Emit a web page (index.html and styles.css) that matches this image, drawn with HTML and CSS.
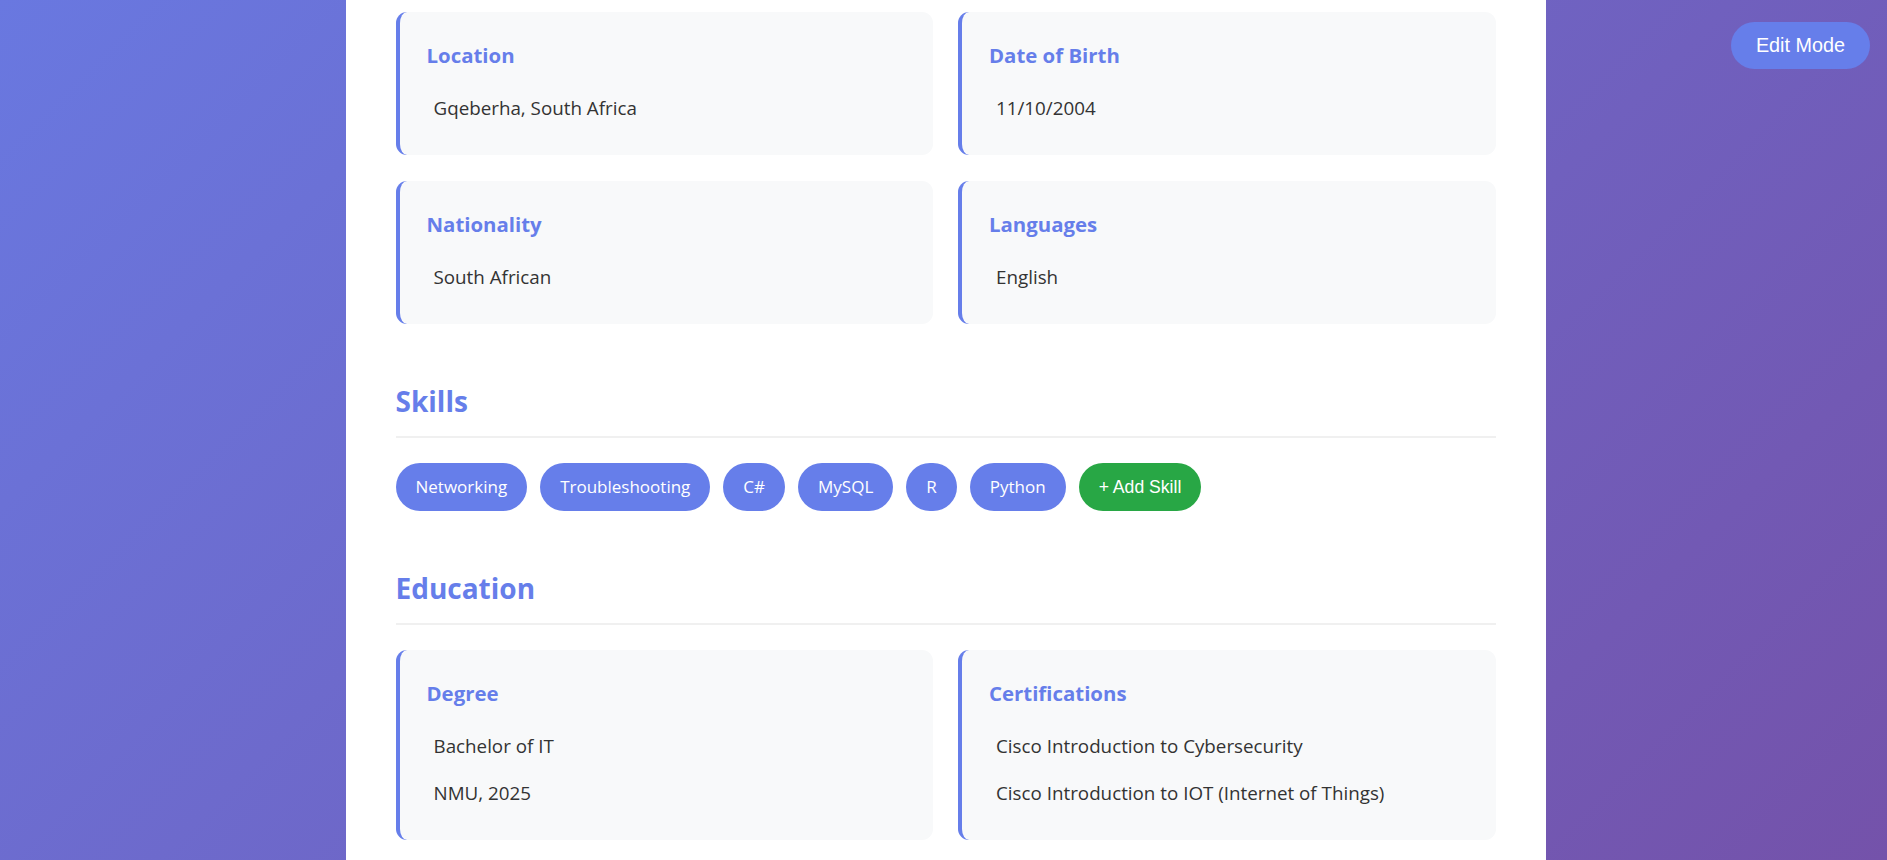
FILE: index.html
```html
<!DOCTYPE html>
<html lang="en">
<head>
<meta charset="utf-8">
<title>CV</title>
<link rel="stylesheet" href="styles.css">
</head>
<body>
<button class="edit-btn">Edit Mode</button>
<main class="container">
  <div class="info-grid">
    <div class="card">
      <h3 class="card-label">Location</h3>
      <div class="card-value">Gqeberha, South Africa</div>
    </div>
    <div class="card">
      <h3 class="card-label">Date of Birth</h3>
      <div class="card-value">11/10/2004</div>
    </div>
    <div class="card">
      <h3 class="card-label">Nationality</h3>
      <div class="card-value">South African</div>
    </div>
    <div class="card">
      <h3 class="card-label">Languages</h3>
      <div class="card-value">English</div>
    </div>
  </div>

  <section class="section">
    <h2 class="section-title">Skills</h2>
    <div class="skills">
      <span class="skill">Networking</span>
      <span class="skill">Troubleshooting</span>
      <span class="skill">C#</span>
      <span class="skill">MySQL</span>
      <span class="skill">R</span>
      <span class="skill">Python</span>
      <button class="add-skill">+ Add Skill</button>
    </div>
  </section>

  <section class="section">
    <h2 class="section-title">Education</h2>
    <div class="info-grid">
      <div class="card">
        <h3 class="card-label">Degree</h3>
        <div class="card-value">Bachelor of IT</div>
        <div class="card-value">NMU, 2025</div>
      </div>
      <div class="card">
        <h3 class="card-label">Certifications</h3>
        <div class="card-value">Cisco Introduction to Cybersecurity</div>
        <div class="card-value">Cisco Introduction to IOT (Internet of Things)</div>
      </div>
    </div>
  </section>
</main>
</body>
</html>
```
FILE: styles.css
```css
* { box-sizing: border-box; }

html, body {
  margin: 0;
  height: 860px;
  overflow: hidden;
}

body {
  font-family: "Segoe UI", "Open Sans", sans-serif;
  background: linear-gradient(135deg, #6978e0 0%, #7452aa 100%);
  color: #333;
}

.container {
  width: 1200px;
  margin: 0 auto;
  padding: 12px 50px 0;
  background: #fff;
  min-height: 860px;
  position: relative;
  left: 2px;
}

.info-grid {
  display: grid;
  grid-template-columns: 1fr 1fr;
  gap: 26px 25px;
}

.card {
  background: #f8f9fa;
  border-left: 4px solid #667eea;
  border-radius: 11px;
  padding: 30px 27px 23px;
}

.card-label {
  margin: 0 0 17px;
  font-size: 20.4px;
  line-height: 26px;
  font-weight: 700;
  color: #667eea;
}

.card-value {
  padding: 10px 7px;
  font-size: 18.8px;
  line-height: 27px;
  color: #333;
}

.section {
  margin-top: 55px;
}

.section-title {
  margin: 0 0 25px;
  font-size: 28px;
  line-height: 40px;
  font-weight: 700;
  color: #667eea;
  padding-top: 2px;
  padding-bottom: 15px;
  border-bottom: 2px solid #f0f0f0;
}

.skills {
  display: flex;
  flex-wrap: wrap;
  gap: 13px;
  margin-top: 1px;
}

.skill {
  background: #667eea;
  color: #fff;
  font-size: 17px;
  line-height: 24px;
  padding: 12px 20px;
  height: 48px;
  border-radius: 25px;
}

.add-skill {
  background: #28a745;
  color: #fff;
  border: none;
  font-family: "Liberation Sans", Arial, sans-serif;
  font-size: 17.6px;
  line-height: 20px;
  padding: 14px 20px;
  height: 48px;
  border-radius: 25px;
}

.edit-btn {
  position: fixed;
  top: 22px;
  right: 17px;
  background: #667eea;
  color: #fff;
  border: none;
  font-family: "Liberation Sans", Arial, sans-serif;
  font-size: 19.8px;
  line-height: 23px;
  padding: 12px 25px;
  border-radius: 25px;
  z-index: 10;
}
```
